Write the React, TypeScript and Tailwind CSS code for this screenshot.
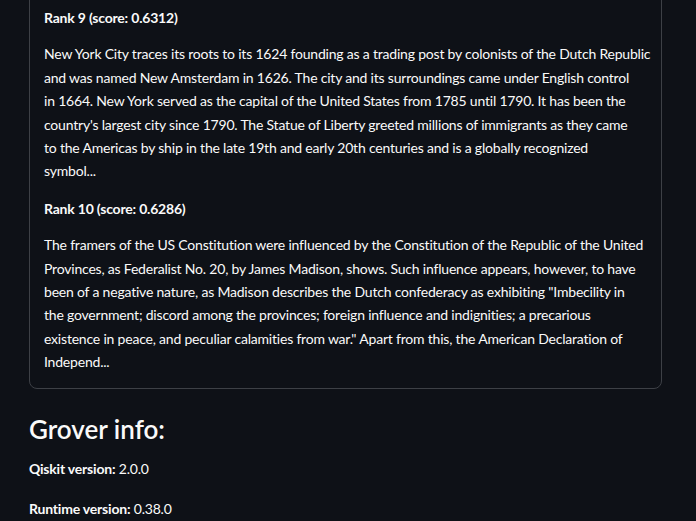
const rank9 = [
  'New York City traces its roots to its 1624 founding as a trading post by colonists of the Dutch Republic',
  'and was named New Amsterdam in 1626. The city and its surroundings came under English control',
  'in 1664. New York served as the capital of the United States from 1785 until 1790. It has been the',
  "country's largest city since 1790. The Statue of Liberty greeted millions of immigrants as they came",
  'to the Americas by ship in the late 19th and early 20th centuries and is a globally recognized',
  'symbol...',
];

const rank10 = [
  'The framers of the US Constitution were influenced by the Constitution of the Republic of the United',
  'Provinces, as Federalist No. 20, by James Madison, shows. Such influence appears, however, to have',
  'been of a negative nature, as Madison describes the Dutch confederacy as exhibiting "Imbecility in',
  'the government; discord among the provinces; foreign influence and indignities; a precarious',
  'existence in peace, and peculiar calamities from war." Apart from this, the American Declaration of',
  'Independ...',
];

function Lines({ lines }: { lines: string[] }) {
  return (
    <p className="mb-[14px]">
      {lines.map((l, i) => (
        <span key={i} className="block whitespace-nowrap">
          {l}
        </span>
      ))}
    </p>
  );
}

export default function App() {
  return (
    <div
      className="w-[696px] h-[521px] overflow-hidden bg-[#0e1117] text-[#fafafa] text-[14px] tracking-[-0.2px] leading-[23.4px]"
      style={{ fontFamily: 'Lato, "Open Sans", sans-serif' }}
    >
      <div className="ml-[29px] w-[633px] mt-[-9px] border border-[#3d4046] rounded-lg px-[14px] pt-[14px]">
        <p className="font-bold mb-[13px]">Rank 9 (score: 0.6312)</p>
        <Lines lines={rank9} />
        <p className="font-bold mb-[13px]">Rank 10 (score: 0.6286)</p>
        <Lines lines={rank10} />
      </div>

      <div className="ml-[29px]">
        <h3 className="text-[26px] font-semibold tracking-normal leading-[34px] mt-[23px] mb-[11px]">Grover info:</h3>
        <p className="mb-[17px]">
          <span className="font-bold">Qiskit version:</span> 2.0.0
        </p>
        <p>
          <span className="font-bold">Runtime version:</span> 0.38.0
        </p>
      </div>
    </div>
  );
}
